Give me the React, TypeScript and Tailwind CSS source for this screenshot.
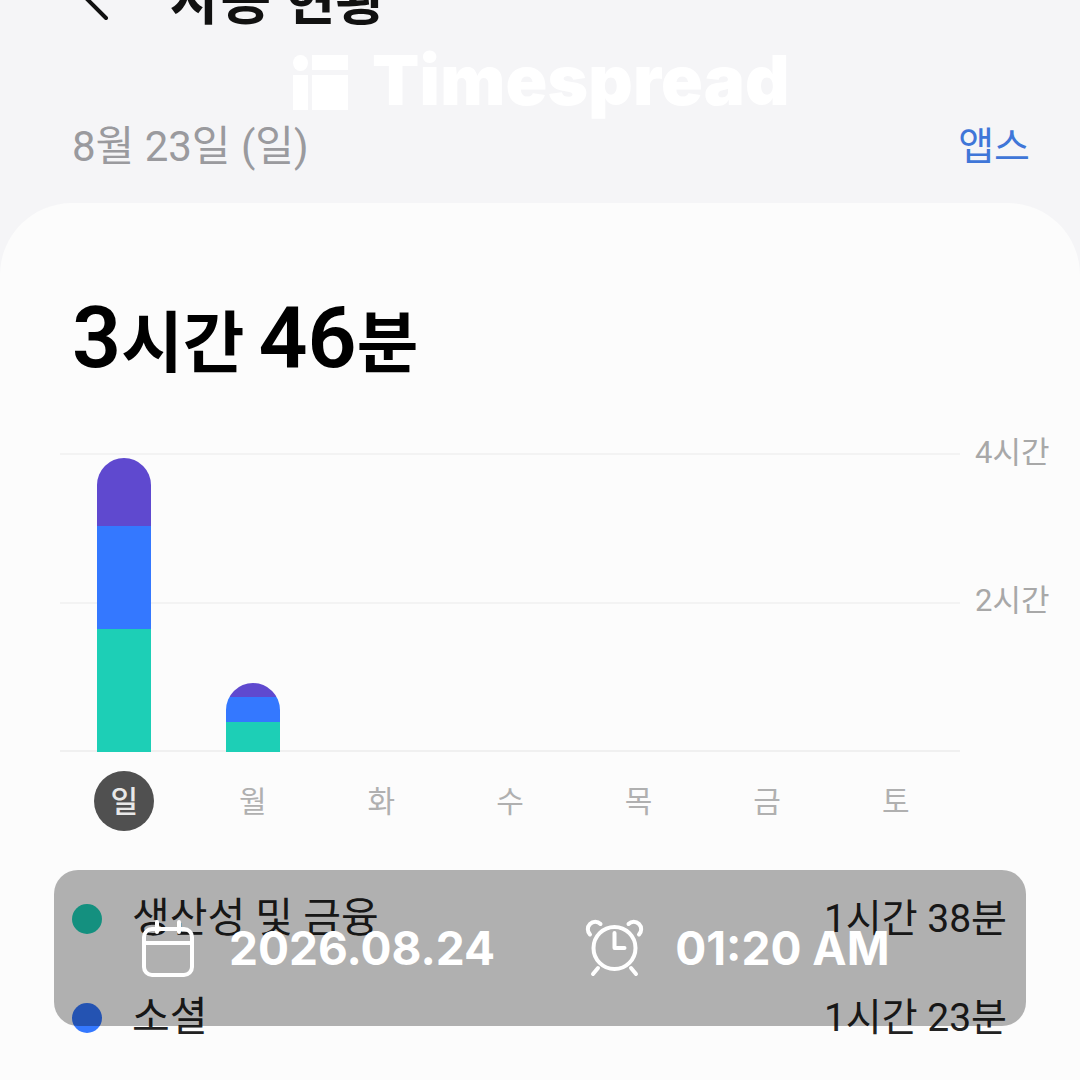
const days = ['일', '월', '화', '수', '목', '금', '토']

const font = "font-['Roboto','Noto_Sans_CJK_KR',sans-serif]"

function CalendarIcon() {
  return (
    <svg width="52" height="58" viewBox="0 0 52 58" fill="none" stroke="white" strokeWidth="4" strokeLinecap="round" strokeLinejoin="round">
      <rect x="2" y="10" width="48" height="46" rx="8" />
      <path d="M2 24h48" />
      <path d="M15 3v10M37 3v10" />
    </svg>
  )
}

function AlarmIcon() {
  return (
    <svg width="60" height="58" viewBox="0 0 60 58" fill="none" stroke="white" strokeWidth="4" strokeLinecap="round" strokeLinejoin="round">
      <circle cx="29.5" cy="29" r="21" />
      <path d="M29.5 14v15h10" />
      <path d="M5 15.500A7 7 0 1 1 15.500 5" />
      <path d="M54 15.500A7 7 0 1 0 43.500 5" />
      <path d="M13 49l-5 6M46 49l5 6" />
    </svg>
  )
}

function Bar({ purple, blue, green }: { purple: number; blue: number; green: number }) {
  return (
    <div className="flex w-[54px] flex-col overflow-hidden rounded-t-[27px]">
      <div className="bg-[#5f49cf]" style={{ height: purple }} />
      <div className="bg-[#3478ff]" style={{ height: blue }} />
      <div className="bg-[#1dcfb6]" style={{ height: green }} />
    </div>
  )
}

function LegendRow({ color, name, time }: { color: string; name: string; time: string }) {
  return (
    <div className="flex h-[99px] items-center justify-between pl-[72px] pr-[73px]">
      <div className="flex items-center gap-[30px]">
        <span className={`h-[30px] w-[30px] rounded-full ${color}`} />
        <span className="text-[41px] leading-none text-[#222]">{name}</span>
      </div>
      <span className="pt-[2px] text-[39px] leading-none text-[#222]">{time}</span>
    </div>
  )
}

export default function App() {
  return (
    <div className={`relative h-[1080px] w-[1080px] overflow-hidden bg-[#f5f5f7] ${font}`}>
      <header className="-mt-[22px] flex h-[44px] items-center pl-[84px]">
        <svg width="26" height="44" viewBox="0 0 26 44" fill="none" stroke="#111" strokeWidth="4" strokeLinecap="round">
          <path d="M22 40L1 19" />
        </svg>
        <span className="ml-[60px] text-[55px] font-bold leading-none text-[#111]">사용 현황</span>
      </header>

      <div className="mt-[103px] flex items-center justify-between pl-[72px] pr-[50px]">
        <span className="text-[42px] leading-[44px] text-[#9a9a9e]">8월 23일 (일)</span>
        <span className="text-[39px] leading-[44px] text-[#3f76d8]">앱스</span>
      </div>

      <main className="mt-[34px] h-[900px] rounded-t-[72px] bg-[#fcfcfc] pt-[92px]">
        <div className="flex items-baseline pl-[72px] font-semibold leading-none text-black">
          <span className="text-[86px]">3</span>
          <span className="text-[67px]">시간</span>
          <span className="ml-[14px] text-[86px]">46</span>
          <span className="text-[67px]">분</span>
        </div>

        <div className="mt-[72px] flex pl-[60px]">
          <div className="grid h-[299px] w-[900px]">
            <div className="col-start-1 row-start-1 flex flex-col justify-between">
              <div className="h-[2px] bg-[#f3f3f3]" />
              <div className="h-[2px] bg-[#f3f3f3]" />
              <div className="h-[2px] bg-[#f0f0f0]" />
            </div>
            <div className="col-start-1 row-start-1 grid grid-cols-7 items-end justify-items-center">
              <Bar purple={68} blue={103} green={123} />
              <Bar purple={14} blue={25} green={30} />
            </div>
          </div>
          <div className="-mt-[16px] ml-[15px] flex h-[180px] flex-col justify-between text-[31px] leading-[32px] text-[#a8a8a8]">
            <span>4시간</span>
            <span>2시간</span>
          </div>
        </div>

        <div className="mt-[19px] ml-[60px] grid w-[900px] grid-cols-7 justify-items-center text-[30px] text-[#b0b0b0]">
          {days.map((day, i) => (
            <span
              key={day}
              className={`flex h-[60px] w-[60px] items-center justify-center rounded-full ${i === 0 ? 'bg-[#505050] font-medium text-[#e8e8e8]' : ''}`}
            >
              {day}
            </span>
          ))}
        </div>

        <div className="mt-[38px]">
          <LegendRow color="bg-[#1dcfb6]" name="생산성 및 금융" time="1시간 38분" />
          <LegendRow color="bg-[#3478ff]" name="소셜" time="1시간 23분" />
        </div>
      </main>

      {/* watermark sits over the header */}
      <div className="absolute left-[293px] top-[55px] flex items-start gap-[23px] text-white">
        <svg width="56" height="55" viewBox="0 0 56 55" fill="white">
          <ellipse cx="7.5" cy="8" rx="7.5" ry="8" />
          <rect x="0" y="20" width="15" height="35" />
          <rect x="19" y="0" width="36" height="15" />
          <rect x="19" y="20" width="36" height="35" />
        </svg>
        <span className="-mt-[9px] font-['Inter',sans-serif] text-[69px] font-black leading-none tracking-[0.2px]">Timespread</span>
      </div>

      {/* date stamp overlay */}
      <div className="absolute left-[54px] top-[870px] flex h-[156px] w-[972px] items-center rounded-[24px] bg-black/30 pl-[88px] font-['Inter',sans-serif] text-[46px] font-bold leading-none text-white">
        <CalendarIcon />
        <span className="ml-[35px]">2026.08.24</span>
        <span className="ml-[90px]"><AlarmIcon /></span>
        <span className="ml-[30px]">01:20 AM</span>
      </div>
    </div>
  )
}
